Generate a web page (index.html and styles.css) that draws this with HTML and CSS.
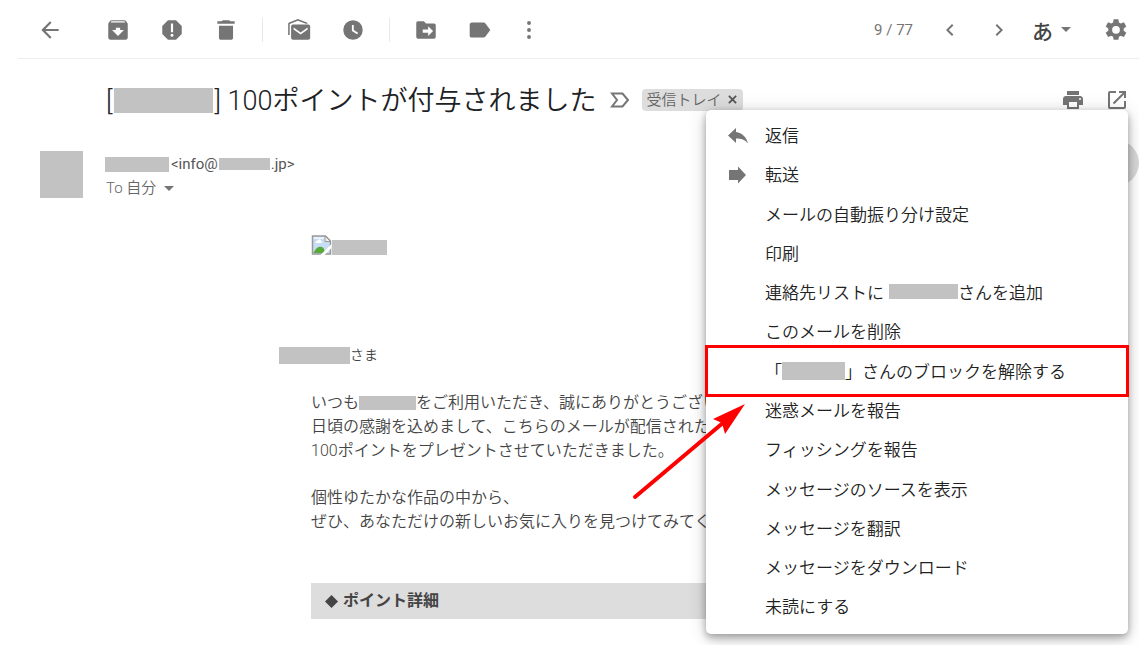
FILE: index.html
```html
<!DOCTYPE html>
<html lang="ja">
<head>
<meta charset="utf-8">
<title>100ポイントが付与されました</title>
<link rel="stylesheet" href="styles.css">
</head>
<body>
<header class="toolbar">
  <button class="tool tool-back" aria-label="戻る"><svg class="icon" viewBox="0 0 24 24"><path d="M20 11H7.8l5.6-5.6L12 4l-8 8 8 8 1.4-1.4L7.8 13H20z"/></svg></button>
  <button class="tool" aria-label="アーカイブ"><svg class="icon" viewBox="0 0 24 24"><path fill-rule="evenodd" d="M20.500 5.200l-1.400-1.700C18.900 3.200 18.500 3 18 3H6c-.5 0-.9.2-1.200.5L3.500 5.200C3.200 5.600 3 6 3 6.500V19c0 1.100.9 2 2 2h14c1.100 0 2-.9 2-2V6.500c0-.5-.2-.9-.5-1.300zM12 17.500L6.500 12H10v-2h4v2h3.500L12 17.500zM5.100 5l.8-1h12l.9 1H5.100z"/></svg></button>
  <button class="tool" aria-label="迷惑メール"><svg class="icon" viewBox="0 0 24 24"><path fill-rule="evenodd" d="M15.700 3H8.300L3 8.300v7.400L8.300 21h7.400l5.300-5.300V8.300L15.700 3zM12 18.300a1.400 1.400 0 1 1 0-2.800 1.400 1.400 0 0 1 0 2.800zM13 14h-2V6h2z"/></svg></button>
  <button class="tool" aria-label="削除"><svg class="icon" viewBox="0 0 24 24"><path d="M5.500 19.300c0 1 .9 1.700 1.900 1.700h9.200c1 0 1.900-.7 1.900-1.700V8h-13zM20 4h-4l-1-1H9L8 4H4v2.200h16z"/></svg></button>
  <span class="divider"></span>
  <button class="tool" aria-label="未読にする"><svg class="icon" viewBox="0 0 24 24"><path d="M3.400 16.700H2V6.300c0-.6.3-1 .8-1.300L11 1.800 19.300 5l.8 1.300h-1.800L11 3.400 3.400 6.500z"/><path fill-rule="evenodd" d="M6.500 7h14c1.100 0 1.800.8 1.800 1.800v10.400c0 1-.7 1.800-1.800 1.800h-14c-1 0-1.800-.8-1.800-1.800V8.800c0-1 .8-1.800 1.800-1.800zm7 7.300L7 9.600v1.900l6.500 4.700 6.500-4.700V9.600z"/></svg></button>
  <button class="tool" aria-label="スヌーズ"><svg class="icon" viewBox="0 0 24 24"><path fill-rule="evenodd" d="M12 3a9 9 0 1 0 0 18 9 9 0 0 0 0-18zm3.800 13L11 13V7.300h1.700v4.800l4 2.400z"/></svg></button>
  <span class="divider"></span>
  <button class="tool" aria-label="移動"><svg class="icon" viewBox="0 0 24 24"><path fill-rule="evenodd" d="M19.500 6H12l-2-2H4.500C3.600 4 3 4.800 3 5.700v12.600c0 .9.600 1.700 1.500 1.700h15c.9 0 1.500-.8 1.500-1.700V7.700c0-.9-.6-1.700-1.500-1.700zM14 17.500v-3H9v-3h5v-3l4.500 4.500z"/></svg></button>
  <button class="tool" aria-label="ラベル"><svg class="icon" viewBox="0 0 24 24"><path d="M17 5.900c-.4-.5-1-.9-1.600-.9H4.500C3.500 5 2.500 5.800 2.500 6.800v10.400c0 1 1 1.800 2 1.800h10.900c.6 0 1.200-.4 1.600-.9l4.500-6.100z"/></svg></button>
  <button class="tool tool-narrow" aria-label="その他"><svg class="icon" viewBox="0 0 24 24"><circle cx="12" cy="5.600" r="1.800"/><circle cx="12" cy="12" r="1.800"/><circle cx="12" cy="18.400" r="1.800"/></svg></button>
  <span class="count">9 / 77</span>
  <button class="tool tool-page" aria-label="前へ"><svg class="icon" viewBox="0 0 24 24"><path d="M15.400 7.400L14 6l-6 6 6 6 1.400-1.400L10.800 12z"/></svg></button>
  <button class="tool tool-page" aria-label="次へ"><svg class="icon" viewBox="0 0 24 24"><path d="M10 6L8.600 7.400l4.600 4.600-4.600 4.600L10 18l6-6z"/></svg></button>
  <button class="tool tool-lang" aria-label="入力ツール">あ<span class="caret"></span></button>
  <button class="tool tool-gear" aria-label="設定"><svg class="icon" viewBox="0 0 24 24"><path fill-rule="evenodd" d="M9.800 2h4.400l.5 3 1.700 1 2.900-1.100 2.200 3.800-2.400 1.900v2l2.400 2-2.200 3.800-2.900-1.200-1.700 1-.5 2.800H9.800l-.5-2.800-1.700-1-2.900 1.200-2.200-3.800 2.400-2v-2l-2.400-1.900 2.200-3.800L7.600 6l1.700-1zM12 8.200a3.600 3.600 0 1 0 0 7.200 3.600 3.600 0 0 0 0-7.200z"/></svg></button>
</header>

<main class="message">
  <div class="subject-row">
    <h1 class="subject">[<span class="mask mask-subject"></span>] 100ポイントが付与されました</h1>
    <svg class="marker" viewBox="0 0 20 16"><path d="M2 1.500h10.500l5.500 6.500-5.500 6.500H2L7 8z"/></svg>
    <span class="chip">受信トレイ<button class="chip-close" aria-label="ラベルを外す"><svg viewBox="0 0 10 10"><path d="M1 1l8 8M9 1L1 9"/></svg></button></span>
    <div class="subject-actions">
      <button class="action" aria-label="すべて印刷"><svg class="icon" viewBox="0 0 24 24"><path fill-rule="evenodd" d="M19 8H5c-1.700 0-3 1.300-3 3v6h4v4h12v-4h4v-6c0-1.700-1.300-3-3-3zm-3 11H8v-5h8v5zm3-7a1 1 0 1 1 0-2 1 1 0 0 1 0 2zM18 3H6v4h12z"/></svg></button>
      <button class="action" aria-label="新しいウィンドウで開く"><svg class="icon" viewBox="0 0 24 24"><path d="M19 19H5V5h6V3H5a2 2 0 0 0-2 2v14c0 1.100.9 2 2 2h14a2 2 0 0 0 2-2v-6h-2zM14 3v2h3.600l-9.800 9.800 1.400 1.400L19 6.400V10h2V3z"/></svg></button>
    </div>
  </div>

  <div class="sender-row">
    <span class="avatar"></span>
    <div class="sender">
      <div class="from"><span class="mask mask-name"></span>&lt;info@<span class="mask mask-domain"></span>.jp&gt;</div>
      <div class="to">To 自分<button class="caret-button" aria-label="詳細を表示"><span class="caret"></span></button></div>
    </div>
    <button class="more" aria-label="その他"></button>
  </div>

  <div class="mail">
    <div class="picture">
      <svg class="broken" viewBox="0 0 20 20"><path d="M1 1h13l5 5v13H1z" fill="#c6ddf3" stroke="#999" stroke-width="1.500"/><path d="M2 2h11v2H2z" fill="#fff" opacity=".6"/><path d="M4 8c0-2 2-2 2.500-3 1-1.500 3-.5 3 1 1.500 0 1.500 2 0 2z" fill="#fff"/><path d="M2 18c2-5 6-8 10-5l2 5z" fill="#58aa38"/><path d="M13.500 1v5.500H19z" fill="#eee" stroke="#999"/><path d="M9 20L20 9v4l-7 7z" fill="#fff"/></svg><span class="mask mask-picture"></span>
    </div>
    <p class="greeting"><span class="mask mask-greeting"></span>さま</p>
    <p class="text">いつも<span class="mask mask-shop"></span>をご利用いただき、誠にありがとうござい<br>日頃の感謝を込めまして、こちらのメールが配信された<br>100ポイントをプレゼントさせていただきました。</p>
    <p class="text">個性ゆたかな作品の中から、<br>ぜひ、あなただけの新しいお気に入りを見つけてみてく</p>
    <h2 class="banner"><svg class="diamond" viewBox="0 0 12 12"><path d="M6 0l6 6-6 6-6-6z"/></svg>ポイント詳細</h2>
  </div>

  <div class="menu">
    <div class="group">
      <button class="item"><svg class="item-icon" viewBox="0 0 20 20"><path d="M8 7V3L0 10.500 8 18v-4.500c5 0 9 1 12 5C18.500 12 14 8 8 7z"/></svg>返信</button>
      <button class="item"><svg class="item-icon" viewBox="0 0 20 20"><path d="M1 6h9V2.500l8 8.500-8 8.500V16H1z"/></svg>転送</button>
    </div>
    <div class="group">
      <button class="item">メールの自動振り分け設定</button>
      <button class="item">印刷</button>
      <button class="item">連絡先リストに<span class="mask mask-contact"></span>さんを追加</button>
      <button class="item">このメールを削除</button>
    </div>
    <div class="group">
      <div class="highlighted">
        <button class="item">「<span class="mask mask-block"></span>」さんのブロックを解除する</button>
        <span class="frame"></span>
        <svg class="arrow" viewBox="0 0 116 98"><path d="M4 95L93 20" stroke="#f00" stroke-width="4" stroke-linecap="round"/><path d="M114 2L82 17l9 4 3 11z" fill="#f00"/></svg>
      </div>
      <button class="item">迷惑メールを報告</button>
      <button class="item">フィッシングを報告</button>
    </div>
    <div class="group">
      <button class="item">メッセージのソースを表示</button>
      <button class="item">メッセージを翻訳</button>
      <button class="item">メッセージをダウンロード</button>
      <button class="item">未読にする</button>
    </div>
  </div>
</main>
</body>
</html>
```
FILE: styles.css
```css
* {
  box-sizing: border-box;
}

body {
  margin: 0;
  background: #fff;
  color: #444;
  font-family: Roboto, "Noto Sans CJK JP", sans-serif;
  font-weight: 350;
  overflow: hidden;
}

button {
  margin: 0;
  padding: 0;
  border: 0;
  background: none;
  color: inherit;
  font: inherit;
  cursor: pointer;
}

h1, h2, p {
  margin: 0;
  font-weight: 350;
}

.icon {
  display: block;
  width: 26px;
  height: 26px;
  fill: #757575;
}

.mask {
  display: inline-block;
  background: #c2c2c2;
}

.caret {
  display: inline-block;
  border: 5px solid transparent;
  border-top-color: #757575;
  border-bottom: 0;
}

/* Toolbar */

.toolbar {
  display: flex;
  align-items: center;
  height: 59px;
  padding-top: 1px;
  margin-left: 18px;
  border-bottom: 1px solid #eee;
}

.tool {
  display: flex;
  flex: none;
  align-items: center;
  justify-content: center;
  width: 54px;
  height: 40px;
}

.tool-back {
  margin: 0 14px 0 5px;
}

.tool-narrow {
  width: 44px;
}

.divider {
  width: 1px;
  height: 24px;
  margin: 0 9px;
  background: #e8e8e8;
}

.count {
  margin-left: auto;
  margin-right: 12px;
  color: #757575;
  font-size: 15px;
  font-weight: 400;
}

.tool-page {
  width: 49px;
}

.tool-page .icon {
  width: 24px;
  height: 24px;
}

.tool-lang {
  gap: 8px;
  width: 57px;
  margin-right: 13px;
  color: #444;
  font-size: 21px;
  font-weight: 500;
}

.tool-gear {
  width: 46px;
}

/* Subject */

.message {
  position: relative;
}

.subject-row {
  display: flex;
  align-items: center;
  height: 81px;
  padding-left: 106px;
}

.subject {
  padding-bottom: 3px;
  color: #202124;
  font-size: 27px;
  white-space: nowrap;
}

.mask-subject {
  width: 99px;
  height: 25px;
  margin: 0 1px 0 2px;
  vertical-align: -3px;
}

.marker {
  flex: none;
  width: 20px;
  height: 16px;
  margin: 0 12px 0 14px;
  fill: none;
  stroke: #757575;
  stroke-width: 2;
}

.chip {
  display: flex;
  flex: none;
  align-items: center;
  gap: 7px;
  height: 22px;
  padding: 0 6px 0 4px;
  border-radius: 4px;
  background: #ddd;
  color: #666;
  font-size: 15px;
  line-height: 22px;
}

.chip-close svg {
  display: block;
  width: 9px;
  height: 9px;
  stroke: #555;
  stroke-width: 2;
}

.subject-actions {
  display: flex;
  gap: 20px;
  margin-left: auto;
  padding-right: 10px;
}

.action .icon {
  width: 24px;
  height: 24px;
}

/* Sender */

.sender-row {
  display: flex;
  align-items: center;
  height: 68px;
  padding-left: 40px;
}

.avatar {
  width: 43px;
  height: 47px;
  background: #c2c2c2;
}

.sender {
  margin-left: 22px;
  padding-top: 4px;
  color: #555;
  font-size: 15px;
  font-weight: 400;
  line-height: 24px;
}

.from {
  display: flex;
  align-items: center;
}

.mask-name {
  width: 64px;
  height: 15px;
  margin-right: 2px;
}

.mask-domain {
  width: 51px;
  height: 12px;
  margin: 0 1px;
}

.to {
  display: flex;
  align-items: center;
  gap: 8px;
  padding-left: 1px;
  color: #666;
  font-weight: 350;
}

.caret-button {
  display: flex;
}

.more {
  align-self: flex-start;
  width: 46px;
  height: 46px;
  margin-left: auto;
  border-radius: 50%;
  background: #d8d8d8;
}

/* Mail body */

.mail {
  max-width: 911px;
  padding: 27px 0 26px 311px;
  font-size: 16px;
  line-height: 24px;
  white-space: nowrap;
}

.picture {
  display: flex;
  align-items: flex-end;
  height: 20px;
  margin-bottom: 88px;
}

.broken {
  width: 21px;
  height: 20px;
}

.mask-picture {
  width: 55px;
  height: 15px;
}

.greeting {
  display: flex;
  align-items: center;
  margin: 0 0 24px -32px;
  font-size: 14px;
}

.mask-greeting {
  width: 71px;
  height: 17px;
}

.mask-shop {
  width: 57px;
  height: 14px;
  vertical-align: -2px;
}

.text {
  margin-bottom: 23px;
}

.banner {
  display: flex;
  align-items: center;
  gap: 5px;
  height: 36px;
  margin-top: 49px;
  padding-left: 14px;
  background: #ddd;
  font-size: 16px;
  font-weight: 700;
}

.diamond {
  width: 13px;
  height: 13px;
  fill: #444;
}

/* Menu */

.menu {
  position: absolute;
  top: 51px;
  right: 11px;
  display: flex;
  flex-direction: column;
  gap: 1px;
  width: 422px;
  padding: 5px 0 9px;
  border-radius: 5px;
  background: #fff;
  box-shadow: 0 6px 10px rgba(0, 0, 0, .16), 0 2px 20px rgba(0, 0, 0, .16), 0 2px 6px rgba(0, 0, 0, .2);
}

.item {
  position: relative;
  display: flex;
  align-items: center;
  width: 100%;
  height: 39px;
  padding-left: 59px;
  color: #222;
  font-size: 17px;
  white-space: nowrap;
}

.item-icon {
  width: 20px;
  height: 20px;
  margin: 0 17px 0 -37px;
  fill: #757575;
}

.mask-contact {
  width: 69px;
  height: 15px;
  margin-left: 5px;
}

.mask-block {
  width: 63px;
  height: 18px;
}

.highlighted {
  position: relative;
}

.frame {
  position: absolute;
  inset: -6px -1px -7px;
  border: 3px solid #f00;
  pointer-events: none;
}

.arrow {
  position: absolute;
  top: 51px;
  left: -75px;
  z-index: 1;
  width: 116px;
  height: 98px;
  fill: none;
  pointer-events: none;
}
```
